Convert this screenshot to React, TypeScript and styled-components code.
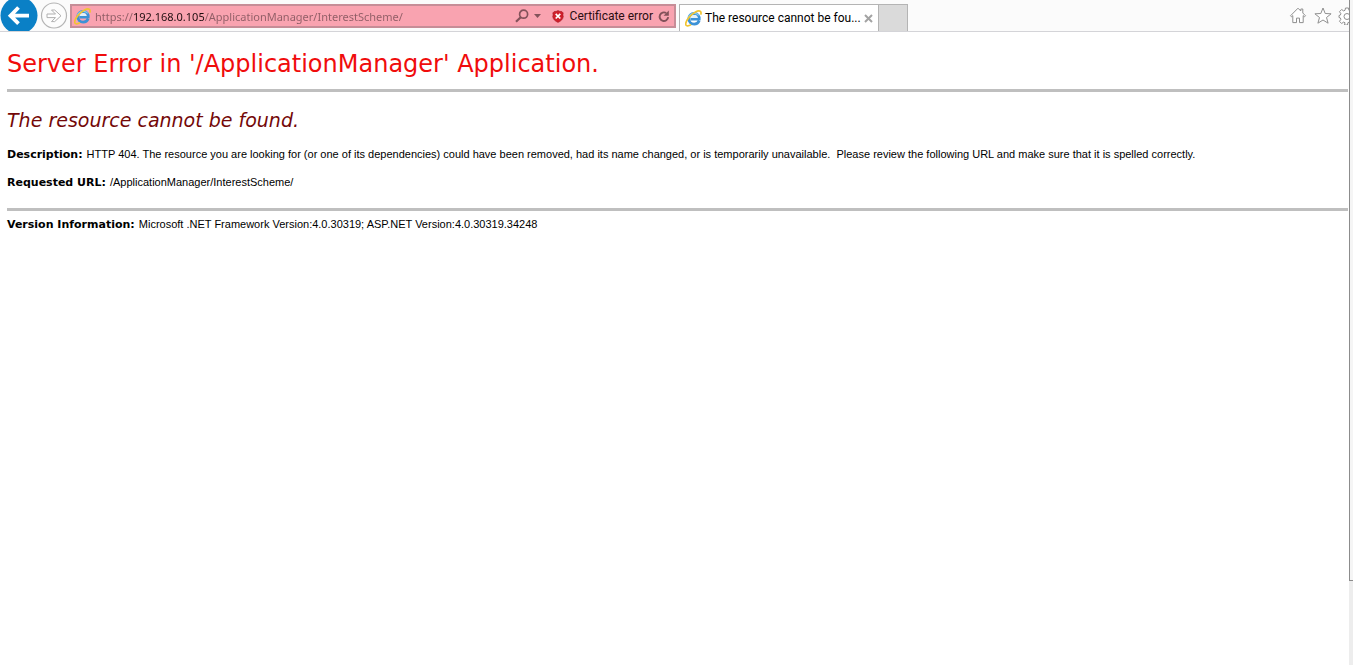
import React from 'react';
import styled, { createGlobalStyle, css } from 'styled-components';

const GlobalStyle = createGlobalStyle`
  * { box-sizing: border-box; }
  body { margin: 0; background: #fff; }
`;

const chromeFont = css`
  font-family: Roboto, 'Open Sans', sans-serif;
  font-size: 12px;
  line-height: 16px;
`;

const Window = styled.div`
  display: flex;
  min-height: 100vh;
`;

const Page = styled.div`
  flex: 1;
  min-width: 0;
`;

const Toolbar = styled.header`
  ${chromeFont}
  display: flex;
  height: 32px;
  background: #fbfbfb;
  border-bottom: 1px solid #d4d4d8;
  overflow: hidden;
`;

const IconButton = styled.button<{ $width: number }>`
  display: flex;
  flex: none;
  align-items: center;
  justify-content: center;
  width: ${(p) => p.$width}px;
  height: 100%;
  padding: 0;
  border: 0;
  background: none;
`;

const Navigation = styled.nav`
  display: flex;
  width: 70px;
  flex: none;
  gap: 2px;
`;

const AddressBar = styled.form`
  display: flex;
  flex: 0 1 606px;
  min-width: 200px;
  height: 24px;
  margin-top: 4px;
  padding: 0 2px;
  align-items: center;
  background: #f9a3b0;
  border: 2px solid #c68d97;
`;

const AddressInput = styled.input`
  flex: 1;
  min-width: 0;
  height: 20px;
  margin: 0 4px;
  padding: 0;
  border: 0;
  outline: 0;
  font: 11px/16px 'Noto Sans', 'Open Sans', sans-serif;
  color: #8f5d65;
  background: linear-gradient(to right, #8f5d65 38px, #1c0c0e 38px 109px, #8f5d65 109px);
  background-clip: text;
  -webkit-text-fill-color: transparent;
`;

const CertificateButton = styled.button`
  ${chromeFont}
  display: flex;
  flex: none;
  align-items: center;
  gap: 6px;
  padding: 0 3px 0 7px;
  border: 0;
  background: none;
  color: #2b0d12;
  white-space: nowrap;
`;

const Tab = styled.div`
  display: flex;
  flex: none;
  width: 200px;
  height: 27px;
  margin: 4px 0 0 3px;
  padding-left: 5px;
  align-items: center;
  gap: 3px;
  background: #fff;
  border: 1px solid #b4b4b4;
  border-bottom: 0;
`;

const TabTitle = styled.span`
  flex: 1;
  min-width: 0;
  color: #000;
  white-space: nowrap;
`;

const NewTab = styled.button`
  flex: none;
  width: 29px;
  height: 27px;
  margin-top: 4px;
  padding: 0;
  background: #dadada;
  border: 1px solid #b4b4b4;
  border-width: 1px 1px 0 0;
`;

const Tools = styled.div`
  display: flex;
  width: 63px;
  flex: none;
  margin-left: auto;
  overflow: hidden;
`;

const Content = styled.main`
  padding: 17px 1px 0 7px;
  color: #000;
  font: 11px/14px 'Liberation Sans', Arial, sans-serif;
`;

const Title = styled.h1`
  margin: 0 0 10px;
  color: #f00c0c;
  font: 24px/30px 'DejaVu Sans', Verdana, sans-serif;
`;

const Subtitle = styled.h2`
  margin: 16px 0 15px;
  color: #740808;
  font: italic 19px/24px 'DejaVu Sans', Verdana, sans-serif;
`;

const Rule = styled.hr`
  height: 3px;
  margin: 0;
  border: 0;
  background: #bfbfbf;
`;

const Details = styled.section`
  display: grid;
  gap: 13px;
  padding-bottom: 18px;
`;

const Paragraph = styled.p`
  margin: 0;
`;

const Footer = styled.footer`
  padding-top: 6px;
`;

const Label = styled.b`
  margin-right: 1px;
  font-family: 'DejaVu Sans', Verdana, sans-serif;
`;

const ScrollTrack = styled.div`
  flex: none;
  width: 4px;
  background: #ededed;
`;

const ScrollThumb = styled.div`
  height: 87.4vh;
  background: #f5f5f5;
  border: solid #8c8c8c;
  border-width: 0 0 1px 1px;
`;

const BackIcon = () => (
  <svg width="38" height="31" viewBox="0 0 38 31">
    <circle cx="19" cy="15.5" r="18.5" fill="#0a80c6" />
    <path d="M29 15.7H11M18.5 7.5L10.5 15.7l8 8" fill="none" stroke="#fff" strokeWidth="3.8" />
  </svg>
);

const ForwardIcon = () => (
  <svg width="28" height="31" viewBox="0 0 28 31">
    <circle cx="14" cy="15.5" r="12.5" fill="#fcfcfc" stroke="#b5b5b5" strokeWidth="1.2" />
    <path d="M7 14h8.5l-4-4h3.2l6.3 5.8-6.3 5.8h-3.2l4-4H7z" fill="#fff" stroke="#b0b0b0" />
  </svg>
);

const Logo = styled.svg`
  flex: none;
`;

const BrowserIcon = () => (
  <Logo width="17" height="17" viewBox="0 0 17 17">
    <path
      d="M14.2 10.8c-.8 2-2.6 3.3-5 3.3-3.3 0-5.4-2.2-5.4-5.3s2.1-5.3 5.4-5.3c3.4 0 5.2 2.3 5 5.7H5.6"
      fill="none"
      stroke="#3c92d6"
      strokeWidth="2.8"
    />
    <path d="M5.5 7.900c.4-1.900 1.800-2.900 3.700-2.900s3.200 1 3.500 2.900z" fill="#e2f1fa" />
    <path d="M3.400 7.400c.8-2.600 3-4.100 5.800-4.100 2 0 3.600.7 4.600 2" fill="none" stroke="#86cbf0" strokeWidth="1.2" />
    <path
      d="M2.5 15.8C-.5 15.9.4 11.6 4.2 7.1 8.2 2.5 13.3-.2 15.4 1.400c.9.8.8 2 .2 3.300M2.5 15.8c1.100.1 2.300-.4 3.600-1.200"
      fill="none"
      stroke="#f0c431"
      strokeWidth="1.7"
    />
  </Logo>
);

const SearchIcon = () => (
  <svg width="14" height="14" viewBox="0 0 14 14">
    <circle cx="8.6" cy="5.2" r="4" fill="none" stroke="#83525a" strokeWidth="1.7" />
    <path d="M5.7 8.2L1 12.8" stroke="#83525a" strokeWidth="2.2" />
  </svg>
);

const CaretIcon = () => (
  <svg width="7" height="4" viewBox="0 0 7 4">
    <path d="M0 0h7L3.5 4z" fill="#83525a" />
  </svg>
);

const ShieldIcon = () => (
  <svg width="12" height="13" viewBox="0 0 12 13">
    <path
      d="M6 .6c1.2.8 2.4 1 3.8.9L11.3 3c-.5 1.2-.5 2.2 0 3.5-.3 2.6-2.3 4.7-5.3 5.9C3 11.2 1 9.1.7 6.5c.5-1.3.5-2.3 0-3.5l1.5-1.5C3.6 1.6 4.8 1.4 6 .6z"
      fill="#cf1f2b"
      stroke="#a81a24"
      strokeWidth=".6"
    />
    <path d="M3.7 3.9l4.6 4.6M8.3 3.9L3.7 8.5" stroke="#fff" strokeWidth="1.7" />
  </svg>
);

const RefreshIcon = () => (
  <svg width="12" height="13" viewBox="0 0 12 13">
    <path d="M8.2 3A4.3 4.3 0 1 0 10.2 7.2" fill="none" stroke="#83525a" strokeWidth="1.9" />
    <path d="M10.8.5v5.2H5.6z" fill="#83525a" />
  </svg>
);

const CloseIcon = () => (
  <svg width="9" height="9" viewBox="0 0 9 9">
    <path d="M1 1l7 7M8 1L1 8" stroke="#a3a3a3" strokeWidth="2" />
  </svg>
);

const HomeIcon = () => (
  <svg width="18" height="17" viewBox="0 0 18 17">
    <path
      d="M1.5 8.8L9 1.2l2.8 2.8V2h2v4l2.7 2.8-1 1-1.3-1.2v7h-3.7v-4.5h-3v4.5H3.8v-7L2.5 9.8z"
      fill="#fff"
      stroke="#8f8f8f"
    />
  </svg>
);

const StarIcon = () => (
  <svg width="18" height="17" viewBox="0 0 18 17">
    <path
      d="M9 1l2.2 5.5 5.9.3-4.6 3.7 1.6 5.7L9 13l-5.1 3.2 1.6-5.7L.9 6.8l5.9-.3z"
      fill="#fff"
      stroke="#8f8f8f"
    />
  </svg>
);

const GearIcon = () => (
  <svg width="18" height="18" viewBox="0 0 18 18">
    <path
      d="M7.5 1h3l.4 2.3 1.4.6 2-1.4 2.2 2.2-1.4 2 .5 1.4L17 8.5v2l-2.4.4-.5 1.4 1.4 2-2.2 2.2-2-1.4-1.4.6-.4 2.3h-3L7 15.7l-1.4-.6-2 1.4-2.1-2.2 1.4-2-.6-1.4L1 10.5v-2l1.3-.4.6-1.4-1.4-2 2.1-2.2 2 1.4L7 3.3z"
      fill="#fff"
      stroke="#8f8f8f"
    />
    <circle cx="9" cy="9.5" r="3" fill="#fff" stroke="#8f8f8f" />
  </svg>
);

export default function App() {
  return (
    <>
      <GlobalStyle />
      <Window>
        <Page>
          <Toolbar>
            <Navigation aria-label="History">
              <IconButton type="button" $width={38} aria-label="Back"><BackIcon /></IconButton>
              <IconButton type="button" $width={28} aria-label="Forward"><ForwardIcon /></IconButton>
            </Navigation>
            <AddressBar onSubmit={(e) => e.preventDefault()}>
              <BrowserIcon />
              <AddressInput
                type="text"
                aria-label="Address"
                spellCheck={false}
                defaultValue="https://192.168.0.105/ApplicationManager/InterestScheme/"
              />
              <IconButton type="submit" $width={18} aria-label="Search"><SearchIcon /></IconButton>
              <IconButton type="button" $width={14} aria-label="Show addresses"><CaretIcon /></IconButton>
              <CertificateButton type="button"><ShieldIcon />Certificate error</CertificateButton>
              <IconButton type="button" $width={16} aria-label="Refresh"><RefreshIcon /></IconButton>
            </AddressBar>
            <Tab>
              <BrowserIcon />
              <TabTitle>The resource cannot be fou...</TabTitle>
              <IconButton type="button" $width={20} aria-label="Close tab"><CloseIcon /></IconButton>
            </Tab>
            <NewTab type="button" aria-label="New tab" />
            <Tools>
              <IconButton type="button" $width={24} aria-label="Home"><HomeIcon /></IconButton>
              <IconButton type="button" $width={25} aria-label="Favorites"><StarIcon /></IconButton>
              <IconButton type="button" $width={24} aria-label="Tools"><GearIcon /></IconButton>
            </Tools>
          </Toolbar>
          <Content>
            <Title>Server Error in '/ApplicationManager' Application.</Title>
            <Rule />
            <Subtitle>The resource cannot be found.</Subtitle>
            <Details>
              <Paragraph>
                <Label>Description:</Label> HTTP 404. The resource you are looking for (or one of its dependencies)
                could have been removed, had its name changed, or is temporarily unavailable.&nbsp; Please review the
                following URL and make sure that it is spelled correctly.
              </Paragraph>
              <Paragraph>
                <Label>Requested URL:</Label> /ApplicationManager/InterestScheme/
              </Paragraph>
            </Details>
            <Rule />
            <Footer>
              <Label>Version Information:</Label> Microsoft .NET Framework Version:4.0.30319; ASP.NET
              Version:4.0.30319.34248
            </Footer>
          </Content>
        </Page>
        <ScrollTrack>
          <ScrollThumb />
        </ScrollTrack>
      </Window>
    </>
  );
}
